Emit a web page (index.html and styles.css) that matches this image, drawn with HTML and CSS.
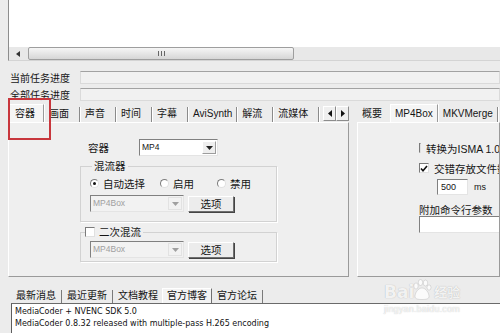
FILE: index.html
```html
<!DOCTYPE html>
<html lang="zh-CN">
<head>
    <meta charset="UTF-8">
    <meta name="viewport" content="width=device-width, initial-scale=1.0">
    <title>MediaCoder</title>
    <link rel="stylesheet" href="styles.css">
</head>
<body>

<div class="app">
    <div class="listbox">
        <div class="list-area"></div>
        <div class="hscroll">
            <div class="sb-btn"><svg width="4" height="6"><path d="M4 0v6L0 3z" fill="#333"/></svg></div>
            <div class="sb-thumb"><span class="grip"></span></div>
            <div class="sb-track"></div>
        </div>
    </div>

    <div class="progress">
        <div class="prog-row"><span class="prog-label">当前任务进度</span><div class="prog-bar"></div></div>
        <div class="prog-row"><span class="prog-label">全部任务进度</span><div class="prog-bar"></div></div>
    </div>

    <div class="panes">
        <div class="pane left-pane">
            <div class="tabs">
                <span class="tab active">容器</span>
                <span class="tab">画面</span>
                <span class="tab">声音</span>
                <span class="tab">时间</span>
                <span class="tab">字幕</span>
                <span class="tab latin">AviSynth</span>
                <span class="tab">解流</span>
                <span class="tab">流媒体</span>
                <div class="tab-arrows">
                    <span class="arrow-btn"><svg width="4" height="7"><path d="M4 0v7L0 3.5z" fill="#111"/></svg></span>
                    <span class="arrow-btn"><svg width="4" height="7"><path d="M0 0v7L4 3.5z" fill="#111"/></svg></span>
                </div>
            </div>
            <div class="pane-body">
                <div class="field-row">
                    <span class="field-label">容器</span>
                    <div class="combo">
                        <span class="combo-text">MP4</span>
                        <span class="combo-btn"><svg width="7" height="4"><path d="M0 0h7L3.5 4z" fill="#222"/></svg></span>
                    </div>
                </div>

                <fieldset class="group">
                    <legend>混流器</legend>
                    <div class="radio-row">
                        <label class="radio-item wide"><span class="radio on"></span>自动选择</label>
                        <label class="radio-item"><span class="radio"></span>启用</label>
                        <label class="radio-item"><span class="radio"></span>禁用</label>
                    </div>
                    <div class="combo-row">
                        <div class="combo disabled">
                            <span class="combo-text">MP4Box</span>
                            <span class="combo-btn"><svg width="7" height="4"><path d="M0 0h7L3.5 4z" fill="#a0a0a0"/></svg></span>
                        </div>
                        <button class="btn">选项</button>
                    </div>
                </fieldset>

                <fieldset class="group second">
                    <legend><span class="check"></span>二次混流</legend>
                    <div class="combo-row">
                        <div class="combo disabled">
                            <span class="combo-text">MP4Box</span>
                            <span class="combo-btn"><svg width="7" height="4"><path d="M0 0h7L3.5 4z" fill="#a0a0a0"/></svg></span>
                        </div>
                        <button class="btn">选项</button>
                    </div>
                </fieldset>
            </div>
        </div>

        <div class="pane right-pane">
            <div class="tabs">
                <span class="tab plain">概要</span>
                <span class="tab active latin">MP4Box</span>
                <span class="tab latin">MKVMerge</span>
                <span class="tab latin">FLV</span>
            </div>
            <div class="pane-body right-body">
                <label class="check-row"><span class="check"></span>转换为ISMA 1.0</label>
                <label class="check-row"><span class="check on"><svg width="8" height="7"><path d="M1 3.5l2 2.2L7 1" fill="none" stroke="#111" stroke-width="1.6"/></svg></span>交错存放文件数据</label>
                <div class="ms-row"><span class="num-input">500</span><span class="unit">ms</span></div>
                <div class="param-label">附加命令行参数</div>
                <div class="text-input"></div>
            </div>
        </div>
    </div>

    <div class="news">
        <div class="news-tabs">
            <span class="ntab">最新消息</span>
            <span class="ntab">最近更新</span>
            <span class="ntab plain">文档教程</span>
            <span class="ntab active">官方博客</span>
            <span class="ntab">官方论坛</span>
        </div>
        <div class="news-list">
            <div class="news-line">MediaCoder + NVENC SDK 5.0</div>
            <div class="news-line">MediaCoder 0.8.32 released with multiple-pass H.265 encoding</div>
        </div>
    </div>

    <div class="highlight"></div>

    <div class="watermark">
        <div class="wm-top">
            <span class="wm-bai">Bai</span>
            <svg class="wm-paw" width="22" height="22" viewBox="0 0 22 22">
                <g fill="rgba(255,255,255,0.8)" stroke="rgba(120,120,120,0.35)" stroke-width="0.6">
                    <ellipse cx="5" cy="7" rx="2.2" ry="3"/>
                    <ellipse cx="9.5" cy="3.5" rx="2.2" ry="3"/>
                    <ellipse cx="14.5" cy="4" rx="2.2" ry="3"/>
                    <ellipse cx="18" cy="8.5" rx="2" ry="2.6"/>
                    <path d="M11 9c-4 0-7 5-7 8.5 0 2.5 3 3 7 3s7-.5 7-3C18 14 15 9 11 9z"/>
                </g>
            </svg>
            <span class="wm-cn">经验</span>
        </div>
        <div class="wm-url">jingyan.baidu.com</div>
    </div>
</div>

</body>
</html>
```

FILE: styles.css
```css
* {
    box-sizing: border-box;
}

body {
    margin: 0;
    background-color: #ececec;
    font-family: "Liberation Sans", "Noto Sans CJK SC", sans-serif;
    font-size: 10.5px;
    color: #151515;
    overflow: hidden;
}

.app {
    position: relative;
    width: 500px;
    height: 333px;
    padding-left: 8px;
    overflow: hidden;
}

/* task list */
.listbox {
    background-color: #fff;
    border-left: 1px solid #8d8d8d;
    border-bottom: 1px solid #d4d4d4;
}

.list-area {
    height: 47px;
}

.hscroll {
    display: flex;
    height: 13px;
    background-color: #e8e8e8;
}

.sb-btn {
    width: 17px;
    display: flex;
    align-items: center;
    justify-content: center;
}

.sb-thumb {
    width: 266px;
    margin-left: 2px;
    border: 1px solid #9e9e9e;
    border-radius: 2px;
    background: linear-gradient(#f6f6f6, #d6d6d6);
    display: flex;
    align-items: center;
    justify-content: center;
}

.grip {
    width: 7px;
    height: 5px;
    background: repeating-linear-gradient(90deg, #666 0 1px, transparent 1px 3px);
}

.sb-track {
    flex: 1;
}

/* progress */
.progress {
    margin-top: 10px;
    display: flex;
    flex-direction: column;
    gap: 4px;
}

.prog-row {
    display: flex;
    align-items: center;
    height: 13px;
}

.prog-label {
    width: 72px;
    padding-left: 2px;
    font-size: 10px;
    line-height: 13px;
    padding-top: 2px;
    white-space: nowrap;
}

.prog-bar {
    flex: 1;
    height: 13px;
    background-color: #f1f1f1;
    border: 1px solid #dadada;
    border-top-color: #a2a2a2;
}

/* tab panes */
.panes {
    display: flex;
    gap: 8px;
    margin-top: 2px;
}

.left-pane {
    width: 341px;
    flex: none;
}

.right-pane {
    flex: 1;
    min-width: 0;
}

.tabs {
    display: flex;
    align-items: flex-end;
    height: 19px;
    white-space: nowrap;
}

.tab {
    height: 15px;
    line-height: 14px;
    padding: 0 10px 0 5px;
    border-right: 1px solid #8a8a8a;
    box-shadow: 1px 0 0 #fff;
    font-size: 10px;
}

.tab.latin {
    padding: 0 4px 0 5px;
}

.tab.active {
    height: 18px;
    line-height: 17px;
    padding: 0 8px 0 6px;
    background-color: #f5f5f5;
    border-top: 1px solid #fff;
    border-left: 1px solid #fff;
    border-right-color: #9a9a9a;
}

.tab.active.latin {
    padding: 0 4px 0 4px;
}

.tab.plain {
    border-right: none;
    box-shadow: none;
    padding: 0 8px 0 5px;
}

.tab-arrows {
    display: flex;
    margin-left: auto;
    margin-bottom: 1px;
}

.arrow-btn {
    width: 13px;
    height: 15px;
    display: flex;
    align-items: center;
    justify-content: center;
    background-color: #efefef;
    border: 1px solid #8c8c8c;
    border-top-color: #fff;
    border-left-color: #fff;
}

.pane-body {
    height: 155px;
    border: 1px solid #9a9a9a;
    border-top-color: #fff;
    border-left-color: #fff;
    background-color: #efefef;
}

.left-pane .pane-body {
    padding: 16px 0 0 71px;
}

.field-row {
    display: flex;
    align-items: center;
    height: 17px;
}

.field-label {
    width: 59px;
    padding-left: 8px;
}

.combo {
    display: flex;
    width: 79px;
    height: 17px;
    background-color: #fff;
    border: 1px solid #e4e4e4;
    border-top-color: #808080;
    border-left-color: #808080;
}

.combo-text {
    flex: 1;
    padding-left: 2px;
    font-size: 8.5px;
    line-height: 15px;
}

.combo-btn {
    width: 14px;
    margin: 1px;
    display: flex;
    align-items: center;
    justify-content: center;
    background-color: #eeeeee;
    border: 1px solid #9c9c9c;
    border-top-color: #fff;
    border-left-color: #fff;
}

.combo.disabled {
    width: 94px;
    background-color: #f2f2f2;
    color: #a0a0a0;
}

.combo.disabled .combo-btn {
    border-color: #e2e2e2;
    background-color: #f2f2f2;
}

.group {
    width: 197px;
    margin: 4px 0 0 0;
    padding: 0 0 9px 9px;
    border: 1px solid #d2d2d2;
    box-shadow: 1px 1px 0 #fff;
}

.group legend {
    display: flex;
    align-items: center;
    gap: 4px;
    padding: 0 2px;
    margin-left: 2px;
    line-height: 12px;
}

.group.second {
    margin-top: 4px;
    padding-bottom: 3px;
}

.group.second legend {
    margin-left: -5px;
    padding: 0 2px 0 0;
}

.radio-row {
    display: flex;
    align-items: center;
    height: 14px;
    margin-top: 4px;
}

.radio-item {
    display: flex;
    align-items: center;
    gap: 4px;
    width: 57px;
}

.radio-item.wide {
    width: 70px;
}

.radio {
    position: relative;
    width: 9px;
    height: 9px;
    border-radius: 50%;
    background-color: #fff;
    border: 1px solid #e0e0e0;
    border-top-color: #7c7c7c;
    border-left-color: #7c7c7c;
}

.radio.on::after {
    content: "";
    position: absolute;
    left: 2px;
    top: 2px;
    width: 3px;
    height: 3px;
    border-radius: 50%;
    background-color: #111;
}

.combo-row {
    display: flex;
    align-items: center;
    gap: 4px;
    margin-top: 5px;
}

.second .combo-row {
    margin-top: 3px;
}

.btn {
    width: 46px;
    height: 16px;
    padding: 0;
    font-family: inherit;
    font-size: 10.5px;
    line-height: 14px;
    color: #151515;
    background-color: #ececec;
    border: 1px solid #6e6e6e;
    border-top-color: #fff;
    border-left-color: #fff;
    box-shadow: 1px 1px 0 #444;
}

.check {
    width: 10px;
    height: 10px;
    display: inline-flex;
    align-items: center;
    justify-content: center;
    background-color: #fff;
    border: 1px solid #e0e0e0;
    border-top-color: #7a7a7a;
    border-left-color: #7a7a7a;
}

/* MP4Box settings */
.right-pane .tabs {
    padding-left: 0;
}

.right-body {
    padding: 18px 0 0 61px;
    overflow: hidden;
    white-space: nowrap;
}

.check-row {
    display: flex;
    align-items: center;
    gap: 5px;
    height: 14px;
    font-size: 10.5px;
}

.check-row + .check-row {
    margin-top: 6px;
}

.ms-row {
    display: flex;
    align-items: center;
    gap: 6px;
    margin: 4px 0 0 18px;
}

.num-input {
    width: 31px;
    height: 16px;
    padding-left: 3px;
    font-size: 9px;
    line-height: 14px;
    background-color: #fff;
    border: 1px solid #e4e4e4;
    border-top-color: #808080;
    border-left-color: #808080;
}

.unit {
    font-size: 9px;
}

.param-label {
    margin-top: 9px;
    line-height: 12px;
}

.text-input {
    width: 120px;
    height: 17px;
    background-color: #fff;
    border: 1px solid #e4e4e4;
    border-top-color: #808080;
    border-left-color: #808080;
}

/* news */
.news {
    margin-top: 12px;
}

.news-tabs {
    display: flex;
    align-items: flex-end;
    height: 14px;
    padding-left: 3px;
    white-space: nowrap;
}

.ntab {
    height: 13px;
    line-height: 12px;
    padding: 0 5px;
    border-right: 1px solid #7a7a7a;
    font-size: 10px;
}

.ntab.plain {
    border-right: none;
    padding-right: 4px;
}

.ntab.active {
    height: 15px;
    line-height: 14px;
    padding: 0 4px;
    background-color: #f3f3f3;
    border-top: 1px solid #fff;
    border-left: 1px solid #fff;
    border-right: 1px solid #707070;
}

.news-list {
    height: 30px;
    margin-left: 3px;
    padding: 2px 0 0 3px;
    background-color: #fff;
    border-left: 1px solid #5e5e5e;
    border-top: 1px solid #6a6a6a;
}

.news-line {
    font-family: "DejaVu Sans", sans-serif;
    font-size: 8px;
    line-height: 12px;
    white-space: nowrap;
    color: #111;
}

/* screenshot annotation */
.highlight {
    position: absolute;
    left: 8px;
    top: 98px;
    width: 43px;
    height: 42px;
    border: 2px solid #c8363c;
}

.watermark {
    position: absolute;
    left: 384px;
    top: 279px;
    color: rgba(255, 255, 255, 0.85);
    text-shadow: 0 0 1px rgba(90, 90, 90, 0.45);
}

.wm-top {
    display: flex;
    align-items: flex-end;
}

.wm-bai {
    font-family: "DejaVu Sans", sans-serif;
    font-size: 17px;
    font-weight: bold;
    line-height: 18px;
}

.wm-paw {
    margin: 0 1px 0 -3px;
}

.wm-cn {
    font-size: 13px;
    line-height: 16px;
    font-weight: bold;
}

.wm-url {
    margin-top: 3px;
    font-size: 9px;
    letter-spacing: 0.2px;
}
```
